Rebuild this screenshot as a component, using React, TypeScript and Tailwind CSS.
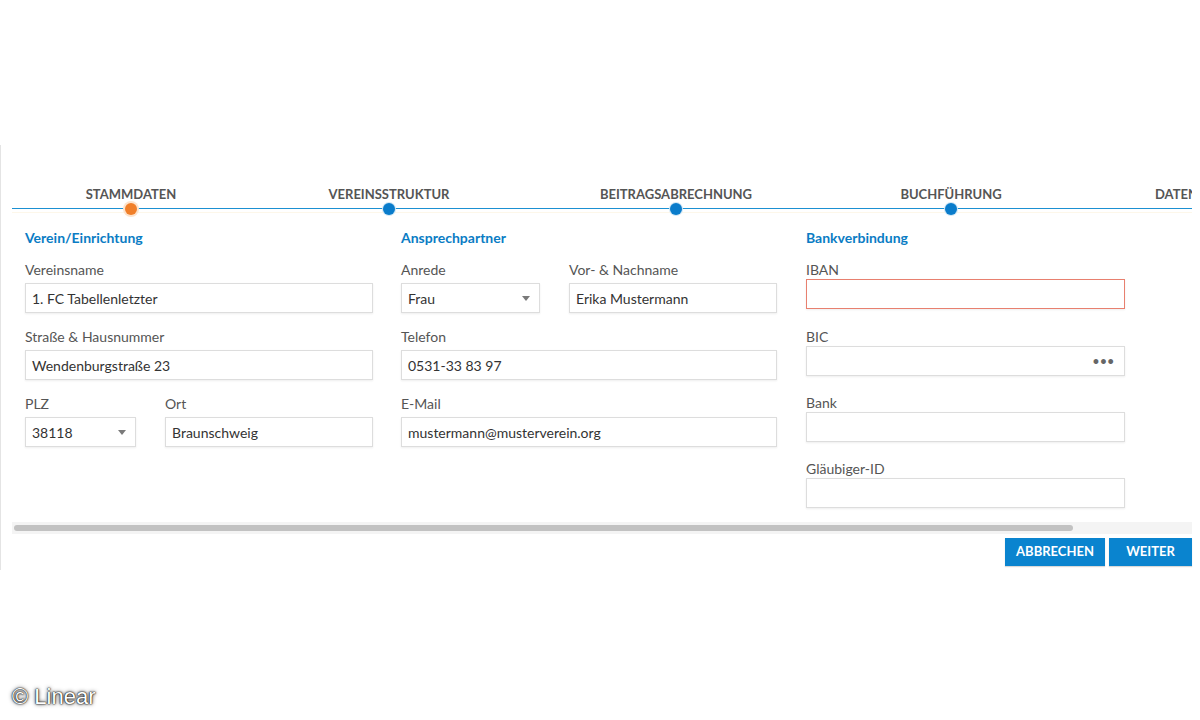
import React from 'react';

const steps = [
  { label: 'STAMMDATEN', w: 'w-[238px]', active: true },
  { label: 'VEREINSSTRUKTUR', w: 'w-[278px]', active: false },
  { label: 'BEITRAGSABRECHNUNG', w: 'w-[296px]', active: false },
  { label: 'BUCHFÜHRUNG', w: 'w-[254px]', active: false },
];

const Caret = () => (
  <span className="w-0 h-0 border-l-[4px] border-r-[4px] border-t-[5px] border-l-transparent border-r-transparent border-t-[#7a7a7a]" />
);

const Box: React.FC<{ value?: string; select?: boolean; dots?: boolean; error?: boolean; className?: string }> = ({ value, select, dots, error, className }) => (
  <div
    className={
      'h-[30px] flex items-center justify-between pl-[6px] pr-[9px] bg-white text-[14px] text-[#333] shadow-[0_1px_2px_rgba(0,0,0,0.07)] border ' +
      (error ? 'border-[#e8806f] ' : 'border-[#dddddd] ') +
      (className ?? '')
    }
  >
    <span>{value}</span>
    {select && <Caret />}
    {dots && <span className="text-[#666] text-[11px] tracking-[1px] font-bold">•••</span>}
  </div>
);

const Field: React.FC<{ label: string; children: React.ReactNode; className?: string }> = ({ label, children, className }) => (
  <div className={className}>
    <div className="text-[14px] leading-5 text-[#555] mb-[3px]">{label}</div>
    {children}
  </div>
);

const BankField: React.FC<{ label: string; children: React.ReactNode; className?: string }> = ({ label, children, className }) => (
  <div className={className}>
    <div className="text-[14px] leading-[18px] text-[#555]">{label}</div>
    {children}
  </div>
);

const Heading: React.FC<{ children: React.ReactNode }> = ({ children }) => (
  <h3 className="text-[14px] leading-[18px] font-bold text-[#0a7cc4]">{children}</h3>
);

export default function App() {
  return (
    <div className="relative h-[720px] w-[1200px] bg-white overflow-hidden font-['Lato',sans-serif]">
      <div className="h-[145px]" />
      <div className="h-[425px] border-l border-[#e4e4e4]">
        <div className="ml-[11px] w-[1180px] overflow-hidden">
          {/* stepper */}
          <div className="flex h-[64px] border-b border-b-[#1b90d2]">
            {steps.map((s) => (
              <div key={s.label} className={s.w + ' shrink-0 flex flex-col items-center justify-end'}>
                <div className="text-[13px] leading-4 font-bold text-[#555] mb-px">{s.label}</div>
                <div
                  className={
                    'w-[12px] h-[12px] rounded-full -mb-[7px] relative z-10 ' +
                    (s.active ? 'bg-[#f07f2a] ring-2 ring-[#fde3cc]' : 'bg-[#0a7ccb] ring-1 ring-[#cfe6f5]')
                  }
                />
              </div>
            ))}
            <div className="shrink-0 flex flex-col justify-end pl-[77px]">
              <div className="text-[13px] leading-4 font-bold text-[#555] whitespace-nowrap mb-[6px]">DATENÜBERNAHME</div>
            </div>
          </div>
          <div className="h-px bg-[#fdf7ea] mt-[3px]" />

          {/* form */}
          <div className="flex gap-[28px] pl-[13px] pt-[16px] pb-[14px]">
            <div className="w-[348px]">
              <Heading>Verein/Einrichtung</Heading>
              <Field label="Vereinsname" className="mt-[13px]">
                <Box value="1. FC Tabellenletzter" />
              </Field>
              <Field label="Straße & Hausnummer" className="mt-[14px]">
                <Box value="Wendenburgstraße 23" />
              </Field>
              <div className="flex gap-[29px] mt-[14px]">
                <Field label="PLZ" className="w-[111px]">
                  <Box value="38118" select />
                </Field>
                <Field label="Ort" className="flex-1">
                  <Box value="Braunschweig" />
                </Field>
              </div>
            </div>

            <div className="w-[376px]">
              <Heading>Ansprechpartner</Heading>
              <div className="flex gap-[29px] mt-[13px]">
                <Field label="Anrede" className="w-[139px]">
                  <Box value="Frau" select />
                </Field>
                <Field label="Vor- & Nachname" className="flex-1">
                  <Box value="Erika Mustermann" />
                </Field>
              </div>
              <Field label="Telefon" className="mt-[14px]">
                <Box value="0531-33 83 97" />
              </Field>
              <Field label="E-Mail" className="mt-[14px]">
                <Box value="mustermann@musterverein.org" />
              </Field>
            </div>

            <div className="w-[320px] pl-px">
              <Heading>Bankverbindung</Heading>
              <BankField label="IBAN" className="mt-[14px]">
                <Box error />
              </BankField>
              <BankField label="BIC" className="mt-[19px]">
                <Box dots />
              </BankField>
              <BankField label="Bank" className="mt-[18px]">
                <Box />
              </BankField>
              <BankField label="Gläubiger-ID" className="mt-[18px]">
                <Box />
              </BankField>
            </div>
          </div>

          {/* scrollbar */}
          <div className="h-[12px] bg-[#f4f4f4] pt-[3px] pl-[2px]">
            <div className="w-[1059px] h-[6px] rounded-full bg-[#c2c2c2]" />
          </div>
        </div>

        <div className="flex justify-end gap-[4px] pr-[8px] mt-[4px]">
          <button className="w-[100px] h-[28px] bg-[#0a84cf] text-white text-[13px] font-bold shadow-[0_1px_1px_rgba(0,0,0,0.15)]">ABBRECHEN</button>
          <button className="w-[83px] h-[28px] bg-[#0a84cf] text-white text-[13px] font-bold shadow-[0_1px_1px_rgba(0,0,0,0.15)]">WEITER</button>
        </div>
      </div>

      <div className="absolute left-[12px] top-[685px] text-[22px] leading-6 text-white font-['Liberation_Sans',sans-serif] [text-shadow:0_0_2px_rgba(0,0,0,1),0_0_4px_rgba(0,0,0,0.8),0_0_1px_rgba(0,0,0,1)]">
        © Linear
      </div>
    </div>
  );
}
